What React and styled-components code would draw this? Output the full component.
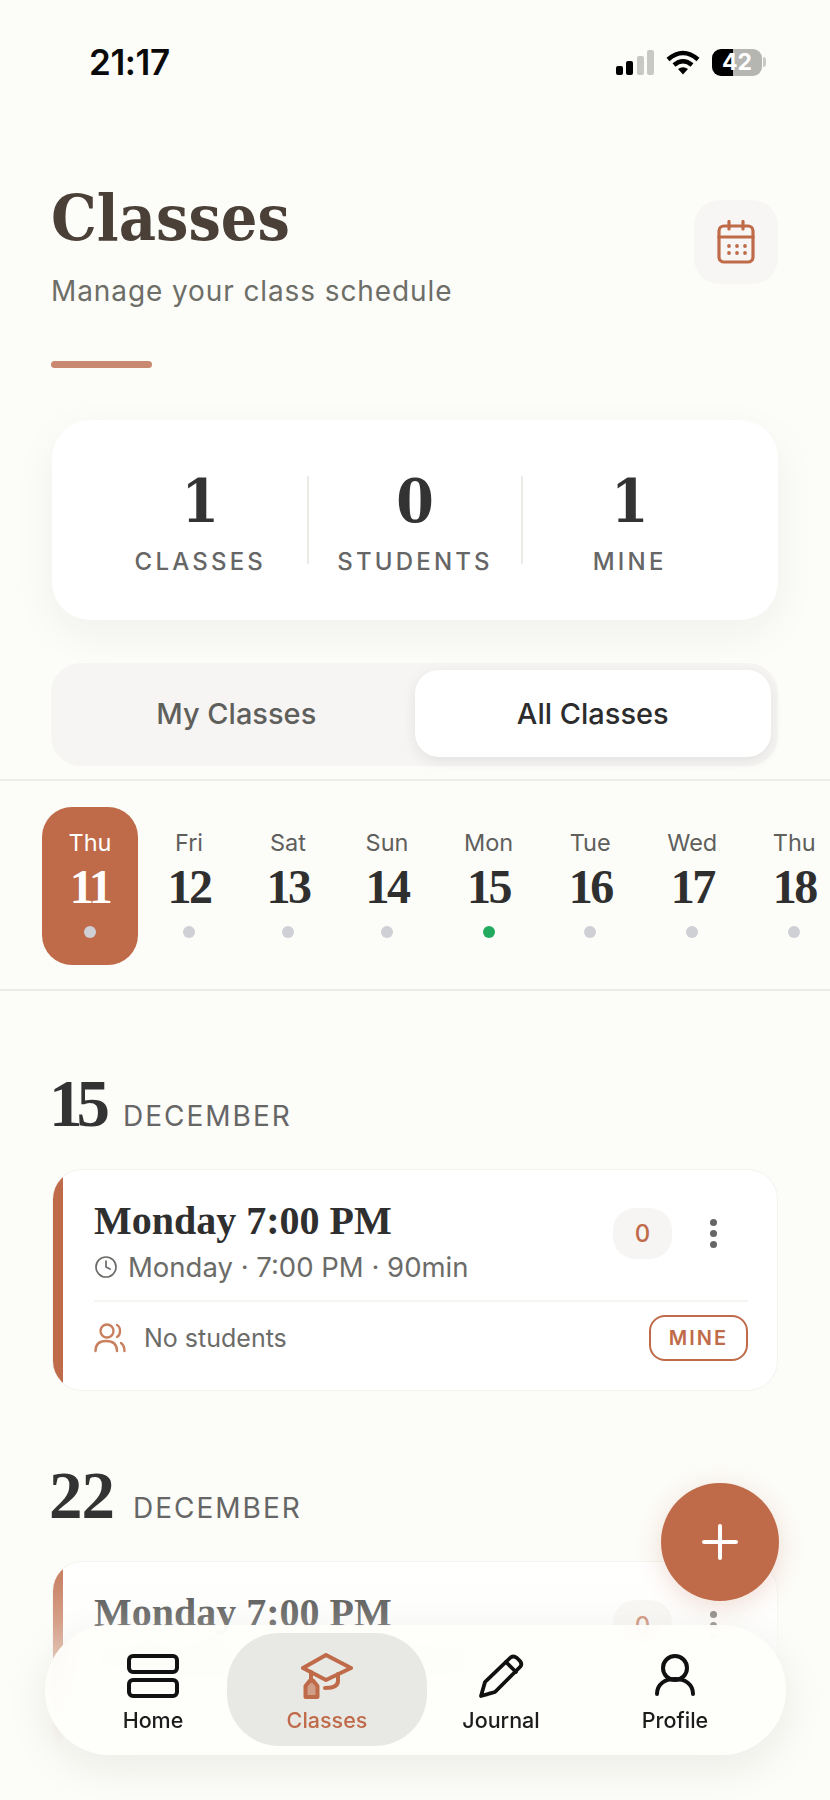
import React from 'react';
import styled, { createGlobalStyle } from 'styled-components';
import { Clock } from 'lucide-react';

const ACCENT = '#bf6b49';
const BG = '#fcfcf8';
const SERIF = '"DejaVu Serif Condensed", "DejaVu Serif", "Liberation Serif", serif';
const TALL_SERIF = '"Liberation Serif", "DejaVu Serif", serif';

const Global = createGlobalStyle`
  html, body { margin: 0; padding: 0; background: ${BG}; }
  * { box-sizing: border-box; }
  body { font-family: Inter, "Noto Sans", sans-serif; }
`;

const Page = styled.div`
  position: relative;
  width: 830px;
  height: 1800px;
  overflow: hidden;
  background: ${BG};
`;

const StatusBar = styled.div`
  display: flex;
  align-items: center;
  justify-content: space-between;
  height: 124px;
  padding: 0 64px 0 89px;
`;
const Time = styled.div`
  font-size: 35px;
  font-weight: 600;
  letter-spacing: -0.4px;
  color: #0a0a0a;
`;
const StatusIcons = styled.div`
  display: flex;
  align-items: center;
  gap: 12px;
`;
const Battery = styled.div`
  display: flex;
  align-items: center;
  justify-content: center;
  width: 50px;
  height: 27px;
  border-radius: 9px;
  font-size: 23px;
  font-weight: 700;
  color: #fff;
  background: linear-gradient(90deg, #000 42%, #b5b5b2 42%);
`;
const BatteryRow = styled.div`
  display: flex;
  align-items: center;
  gap: 1px;
  &::after {
    content: '';
    width: 3px;
    height: 10px;
    border-radius: 0 3px 3px 0;
    background: #c8c8c5;
  }
`;

const Header = styled.header`
  display: flex;
  align-items: center;
  justify-content: space-between;
  margin-top: 56px;
  padding: 0 52px 0 51px;
`;
const Title = styled.h1`
  margin: 0;
  font-family: ${SERIF};
  font-size: 64px;
  font-weight: 700;
  line-height: 76px;
  color: #4a4038;
`;
const Subtitle = styled.p`
  margin: 13px 0 0;
  font-size: 28px;
  line-height: 44px;
  letter-spacing: 0.9px;
  color: #6e6e68;
`;
const CalendarButton = styled.div`
  display: flex;
  align-items: center;
  justify-content: center;
  width: 84px;
  height: 84px;
  margin-bottom: 9px;
  border-radius: 26px;
  background: #f7f6f4;
`;
const AccentRule = styled.div`
  width: 101px;
  height: 7px;
  margin: 48px 0 0 51px;
  border-radius: 4px;
  background: #c98870;
`;

const StatsCard = styled.section`
  display: flex;
  align-items: center;
  height: 200px;
  margin: 52px 52px 0;
  padding: 0 42px;
  border-radius: 38px;
  background: #fff;
  box-shadow: 0 14px 44px rgba(40, 36, 30, 0.055);
`;
const Stat = styled.div`
  flex: 1;
  display: flex;
  flex-direction: column;
  align-items: center;
  padding-bottom: 8px;
  border-left: ${p => (p.$divided ? '2px solid #ecebe6' : 'none')};
  height: 88px;
`;
const StatValue = styled.div`
  font-family: ${SERIF};
  font-size: 60px;
  font-weight: 700;
  line-height: 50px;
  color: #333;
`;
const StatLabel = styled.div`
  margin-top: 24px;
  font-size: 24px;
  font-weight: 500;
  line-height: 24px;
  letter-spacing: 3.2px;
  white-space: nowrap;
  color: #666;
`;

const Tabs = styled.div`
  display: flex;
  height: 103px;
  margin: 43px 52px 0 51px;
  padding: 7px 7px 9px;
  border-radius: 30px;
  background: #f6f5f3;
`;
const Tab = styled.div`
  flex: 1;
  display: flex;
  align-items: center;
  justify-content: center;
  border-radius: 24px;
  font-size: 29px;
  font-weight: 500;
  color: ${p => (p.$active ? '#2c2c2c' : '#5f5f5c')};
  background: ${p => (p.$active ? '#fff' : 'transparent')};
  box-shadow: ${p => (p.$active ? '0 4px 14px rgba(40,36,30,0.09)' : 'none')};
`;

const DayStrip = styled.div`
  display: flex;
  gap: 3px;
  margin-top: 13px;
  padding: 26px 0 24px 42px;
  border-top: 2px solid #ecebe7;
  border-bottom: 2px solid #ecebe7;
  overflow: hidden;
`;
const Day = styled.div`
  flex: none;
  display: flex;
  flex-direction: column;
  align-items: center;
  min-width: 96px;
  height: 158px;
  padding: 22px 26px 0;
  border-radius: 30px;
  background: ${p => (p.$active ? ACCENT : 'transparent')};
`;
const DayName = styled.div`
  font-size: 23.5px;
  line-height: 28px;
  color: ${p => (p.$active ? '#fff' : '#5f5f5c')};
`;
const DayNumber = styled.div`
  margin-top: 5px;
  font-family: ${TALL_SERIF};
  font-size: 48px;
  font-weight: 700;
  line-height: 50px;
  letter-spacing: -2.5px;
  color: ${p => (p.$active ? '#fff' : '#2f2f2f')};
`;
const DayDot = styled.div`
  width: 12px;
  height: 12px;
  margin-top: 14px;
  border-radius: 50%;
  background: ${p => (p.$on ? '#22ab5e' : '#cfd0d6')};
`;

const Section = styled.section`
  padding: 0 52px;
  margin-top: ${p => p.$top}px;
`;
const DateHeading = styled.div`
  display: flex;
  align-items: baseline;
  gap: 19px;
  height: 66px;
`;
const DateNumber = styled.span`
  font-family: ${TALL_SERIF};
  font-size: 67px;
  font-weight: 700;
  line-height: 66px;
  letter-spacing: ${p => p.$spacing}px;
  margin-left: -3px;
  color: #333;
`;
const DateMonth = styled.span`
  font-size: 28px;
  letter-spacing: 2px;
  color: #666;
`;
const ClassCard = styled.article`
  position: relative;
  overflow: hidden;
  height: 222px;
  margin-top: 33px;
  padding: 28px 29px 0 41px;
  border: 1px solid #f3f3ef;
  border-radius: 30px;
  background: #fff;
  &::before {
    content: '';
    position: absolute;
    left: -1px;
    top: -1px;
    bottom: -1px;
    width: 11px;
    background: ${ACCENT};
  }
`;
const CardTop = styled.div`
  display: flex;
  justify-content: space-between;
  align-items: flex-start;
  height: 102px;
`;
const CardTitle = styled.h3`
  margin: 0;
  font-family: ${TALL_SERIF};
  font-size: 40px;
  font-weight: 700;
  line-height: 46px;
  color: #2f2f2f;
`;
const CardMeta = styled.div`
  display: flex;
  align-items: center;
  gap: 10px;
  margin-top: 5px;
  font-size: 27.5px;
  line-height: 36px;
  color: #6b6b68;
`;
const CardActions = styled.div`
  display: flex;
  align-items: center;
  margin-top: 10px;
`;
const CountPill = styled.div`
  display: flex;
  align-items: center;
  justify-content: center;
  width: 59px;
  height: 51px;
  border-radius: 22px;
  font-size: 24px;
  font-weight: 500;
  color: ${ACCENT};
  background: #f6f5f3;
`;
const Kebab = styled.div`
  display: flex;
  flex-direction: column;
  gap: 4px;
  margin: 0 31px 0 38px;
  span {
    width: 7px;
    height: 7px;
    border-radius: 50%;
    background: #666;
  }
`;
const CardBottom = styled.div`
  display: flex;
  align-items: center;
  justify-content: space-between;
  height: 74px;
  border-top: 2px solid #f4f4f1;
`;
const StudentsInfo = styled.div`
  display: flex;
  align-items: center;
  gap: 18px;
  font-size: 25px;
  color: #6b6b68;
`;
const MineTag = styled.div`
  display: flex;
  align-items: center;
  justify-content: center;
  width: 99px;
  height: 46px;
  border: 2px solid ${ACCENT};
  border-radius: 16px;
  font-size: 20px;
  font-weight: 600;
  letter-spacing: 2px;
  color: ${ACCENT};
`;

const BottomFade = styled.div`
  position: absolute;
  left: 0;
  right: 0;
  bottom: 0;
  height: 260px;
  z-index: 1;
  background: linear-gradient(
    180deg,
    rgba(252, 252, 248, 0) 0%,
    rgba(252, 252, 248, 0.35) 30%,
    rgba(252, 252, 248, 0.9) 60%,
    ${BG} 80%
  );
`;
const Fab = styled.div`
  position: absolute;
  left: 661px;
  top: 1483px;
  z-index: 3;
  display: flex;
  align-items: center;
  justify-content: center;
  width: 118px;
  height: 118px;
  border-radius: 50%;
  background: ${ACCENT};
  box-shadow: 0 6px 24px rgba(191, 107, 73, 0.22);
`;
const Nav = styled.nav`
  position: absolute;
  left: 45px;
  top: 1625px;
  z-index: 2;
  display: grid;
  grid-template-columns: repeat(4, 174px);
  width: 741px;
  height: 130px;
  padding: 0 21px;
  border-radius: 65px;
  background: rgba(254, 254, 251, 0.88);
  backdrop-filter: blur(12px);
  box-shadow: 0 12px 44px rgba(40, 36, 30, 0.08);
`;
const NavItem = styled.div`
  position: relative;
  display: flex;
  flex-direction: column;
  align-items: center;
  padding-top: 28px;
  font-size: 21.5px;
  font-weight: 500;
  color: ${p => (p.$active ? ACCENT : '#1c1c1c')};
  &::before {
    content: ${p => (p.$active ? "''" : 'none')};
    position: absolute;
    inset: 8px -13px 9px;
    border-radius: 52px;
    background: rgba(225, 225, 222, 0.72);
  }
`;
const NavIcon = styled.div`
  position: relative;
  display: flex;
  align-items: center;
  justify-content: center;
  height: 46px;
`;
const NavLabel = styled.div`
  position: relative;
  margin-top: 8px;
  line-height: 26px;
`;

const days = [
  ['Thu', 11], ['Fri', 12], ['Sat', 13], ['Sun', 14],
  ['Mon', 15], ['Tue', 16], ['Wed', 17], ['Thu', 18],
];

const SignalIcon = () => (
  <svg width="38" height="25" viewBox="0 0 38 25">
    <rect x="0" y="16" width="7" height="9" rx="2" fill="#000" />
    <rect x="10" y="11" width="7" height="14" rx="2" fill="#000" />
    <rect x="21" y="6" width="7" height="19" rx="2" fill="#c8c8c5" />
    <rect x="31" y="0" width="7" height="25" rx="2" fill="#c8c8c5" />
  </svg>
);
const WifiIcon = () => (
  <svg width="34" height="25" viewBox="0 0 34 25" fill="none" stroke="#000" strokeWidth="4.5">
    <path d="M2 9.5 Q17 -3.5 32 9.5" />
    <path d="M8 15 Q17 7.5 26 15" />
    <path d="M12 19 L17 24.5 L22 19 Q17 15.5 12 19 Z" fill="#000" stroke="none" />
  </svg>
);
const CalendarIcon = () => (
  <svg width="40" height="44" viewBox="0 0 40 44" fill="none" stroke={ACCENT} strokeWidth="3.2" strokeLinecap="round">
    <rect x="3" y="6" width="34" height="36" rx="5" />
    <path d="M3 17 H37 M13 1.5 V9 M27 1.5 V9" />
    <g fill={ACCENT} stroke="none">
      <circle cx="13" cy="26" r="1.9" /><circle cx="21" cy="26" r="1.9" /><circle cx="29" cy="26" r="1.9" />
      <circle cx="13" cy="33" r="1.9" /><circle cx="21" cy="33" r="1.9" /><circle cx="29" cy="33" r="1.9" />
    </g>
  </svg>
);
const UsersIcon = () => (
  <svg width="32" height="30" viewBox="0 0 32 30" fill="none" stroke="#c9805f" strokeWidth="2.4" strokeLinecap="round">
    <circle cx="13" cy="8" r="6.5" />
    <path d="M23 2 C27 4 27 12 23 14" />
    <path d="M1.5 28 C1.5 21 6 18 12 18 C19 18 23 21 23 28" />
    <path d="M27 20 C29.5 22 30.5 25 30.5 28" />
  </svg>
);
const PlusIcon = () => (
  <svg width="38" height="38" viewBox="0 0 38 38" stroke="#fff" strokeWidth="4" strokeLinecap="round">
    <path d="M19 3 V35 M3 19 H35" />
  </svg>
);
const HomeIcon = () => (
  <svg width="52" height="46" viewBox="0 0 52 46" fill="none" stroke="#111" strokeWidth="4">
    <rect x="2" y="3" width="48" height="16" rx="4" />
    <rect x="2" y="27" width="48" height="16" rx="4" />
  </svg>
);
const CapIcon = () => (
  <svg width="52" height="46" viewBox="0 0 52 46" fill="none" stroke={ACCENT} strokeWidth="4" strokeLinejoin="round" strokeLinecap="round">
    <path d="M2 15 L25 2 L50 15 L25 27 Z" />
    <path d="M10 19 V28" />
    <path d="M4.5 33 L9 27.5 L12 27.5 L16.5 33 V44 H4.5 Z" fill={ACCENT} fillOpacity="0.6" />
    <path d="M37 21 V28 Q37 35 24 35" />
  </svg>
);
const PencilIcon = () => (
  <svg width="46" height="46" viewBox="0 0 46 46" fill="none" stroke="#111" strokeWidth="3.8" strokeLinejoin="round" strokeLinecap="round">
    <path d="M3 43 L7 29 L32 5 Q35 2 39 5 L42 8 Q45 12 41 15 L17 39 Z" />
    <path d="M28 9 L38 19" />
  </svg>
);
const UserIcon = () => (
  <svg width="44" height="46" viewBox="0 0 44 46" fill="none" stroke="#111" strokeWidth="4" strokeLinecap="round">
    <circle cx="22" cy="15" r="12" />
    <path d="M4 41 C4 31 12 26 22 26 C32 26 40 31 40 41" />
  </svg>
);

const ClassEntry = () => (
  <ClassCard>
    <CardTop>
      <div>
        <CardTitle>Monday 7:00 PM</CardTitle>
        <CardMeta>
          <Clock size={24} strokeWidth={1.7} color="#6b6b68" />
          Monday · 7:00 PM · 90min
        </CardMeta>
      </div>
      <CardActions>
        <CountPill>0</CountPill>
        <Kebab><span /><span /><span /></Kebab>
      </CardActions>
    </CardTop>
    <CardBottom>
      <StudentsInfo><UsersIcon />No students</StudentsInfo>
      <MineTag>MINE</MineTag>
    </CardBottom>
  </ClassCard>
);

export default function App() {
  return (
    <Page>
      <Global />
      <StatusBar>
        <Time>21:17</Time>
        <StatusIcons>
          <SignalIcon />
          <WifiIcon />
          <BatteryRow><Battery>42</Battery></BatteryRow>
        </StatusIcons>
      </StatusBar>

      <Header>
        <div>
          <Title>Classes</Title>
          <Subtitle>Manage your class schedule</Subtitle>
        </div>
        <CalendarButton><CalendarIcon /></CalendarButton>
      </Header>
      <AccentRule />

      <StatsCard>
        <Stat><StatValue>1</StatValue><StatLabel>CLASSES</StatLabel></Stat>
        <Stat $divided><StatValue>0</StatValue><StatLabel>STUDENTS</StatLabel></Stat>
        <Stat $divided><StatValue>1</StatValue><StatLabel>MINE</StatLabel></Stat>
      </StatsCard>

      <Tabs>
        <Tab>My Classes</Tab>
        <Tab $active>All Classes</Tab>
      </Tabs>

      <DayStrip>
        {days.map(([name, num], i) => (
          <Day key={num} $active={i === 0}>
            <DayName $active={i === 0}>{name}</DayName>
            <DayNumber $active={i === 0}>{num}</DayNumber>
            <DayDot $on={num === 15} />
          </Day>
        ))}
      </DayStrip>

      <Section $top={79}>
        <DateHeading>
          <DateNumber $spacing={-6}>15</DateNumber>
          <DateMonth>DECEMBER</DateMonth>
        </DateHeading>
        <ClassEntry />
      </Section>
      <Section $top={71}>
        <DateHeading>
          <DateNumber $spacing={-1}>22</DateNumber>
          <DateMonth>DECEMBER</DateMonth>
        </DateHeading>
        <ClassEntry />
      </Section>

      <BottomFade />
      <Fab><PlusIcon /></Fab>
      <Nav>
        <NavItem><NavIcon><HomeIcon /></NavIcon><NavLabel>Home</NavLabel></NavItem>
        <NavItem $active><NavIcon><CapIcon /></NavIcon><NavLabel>Classes</NavLabel></NavItem>
        <NavItem><NavIcon><PencilIcon /></NavIcon><NavLabel>Journal</NavLabel></NavItem>
        <NavItem><NavIcon><UserIcon /></NavIcon><NavLabel>Profile</NavLabel></NavItem>
      </Nav>
    </Page>
  );
}
